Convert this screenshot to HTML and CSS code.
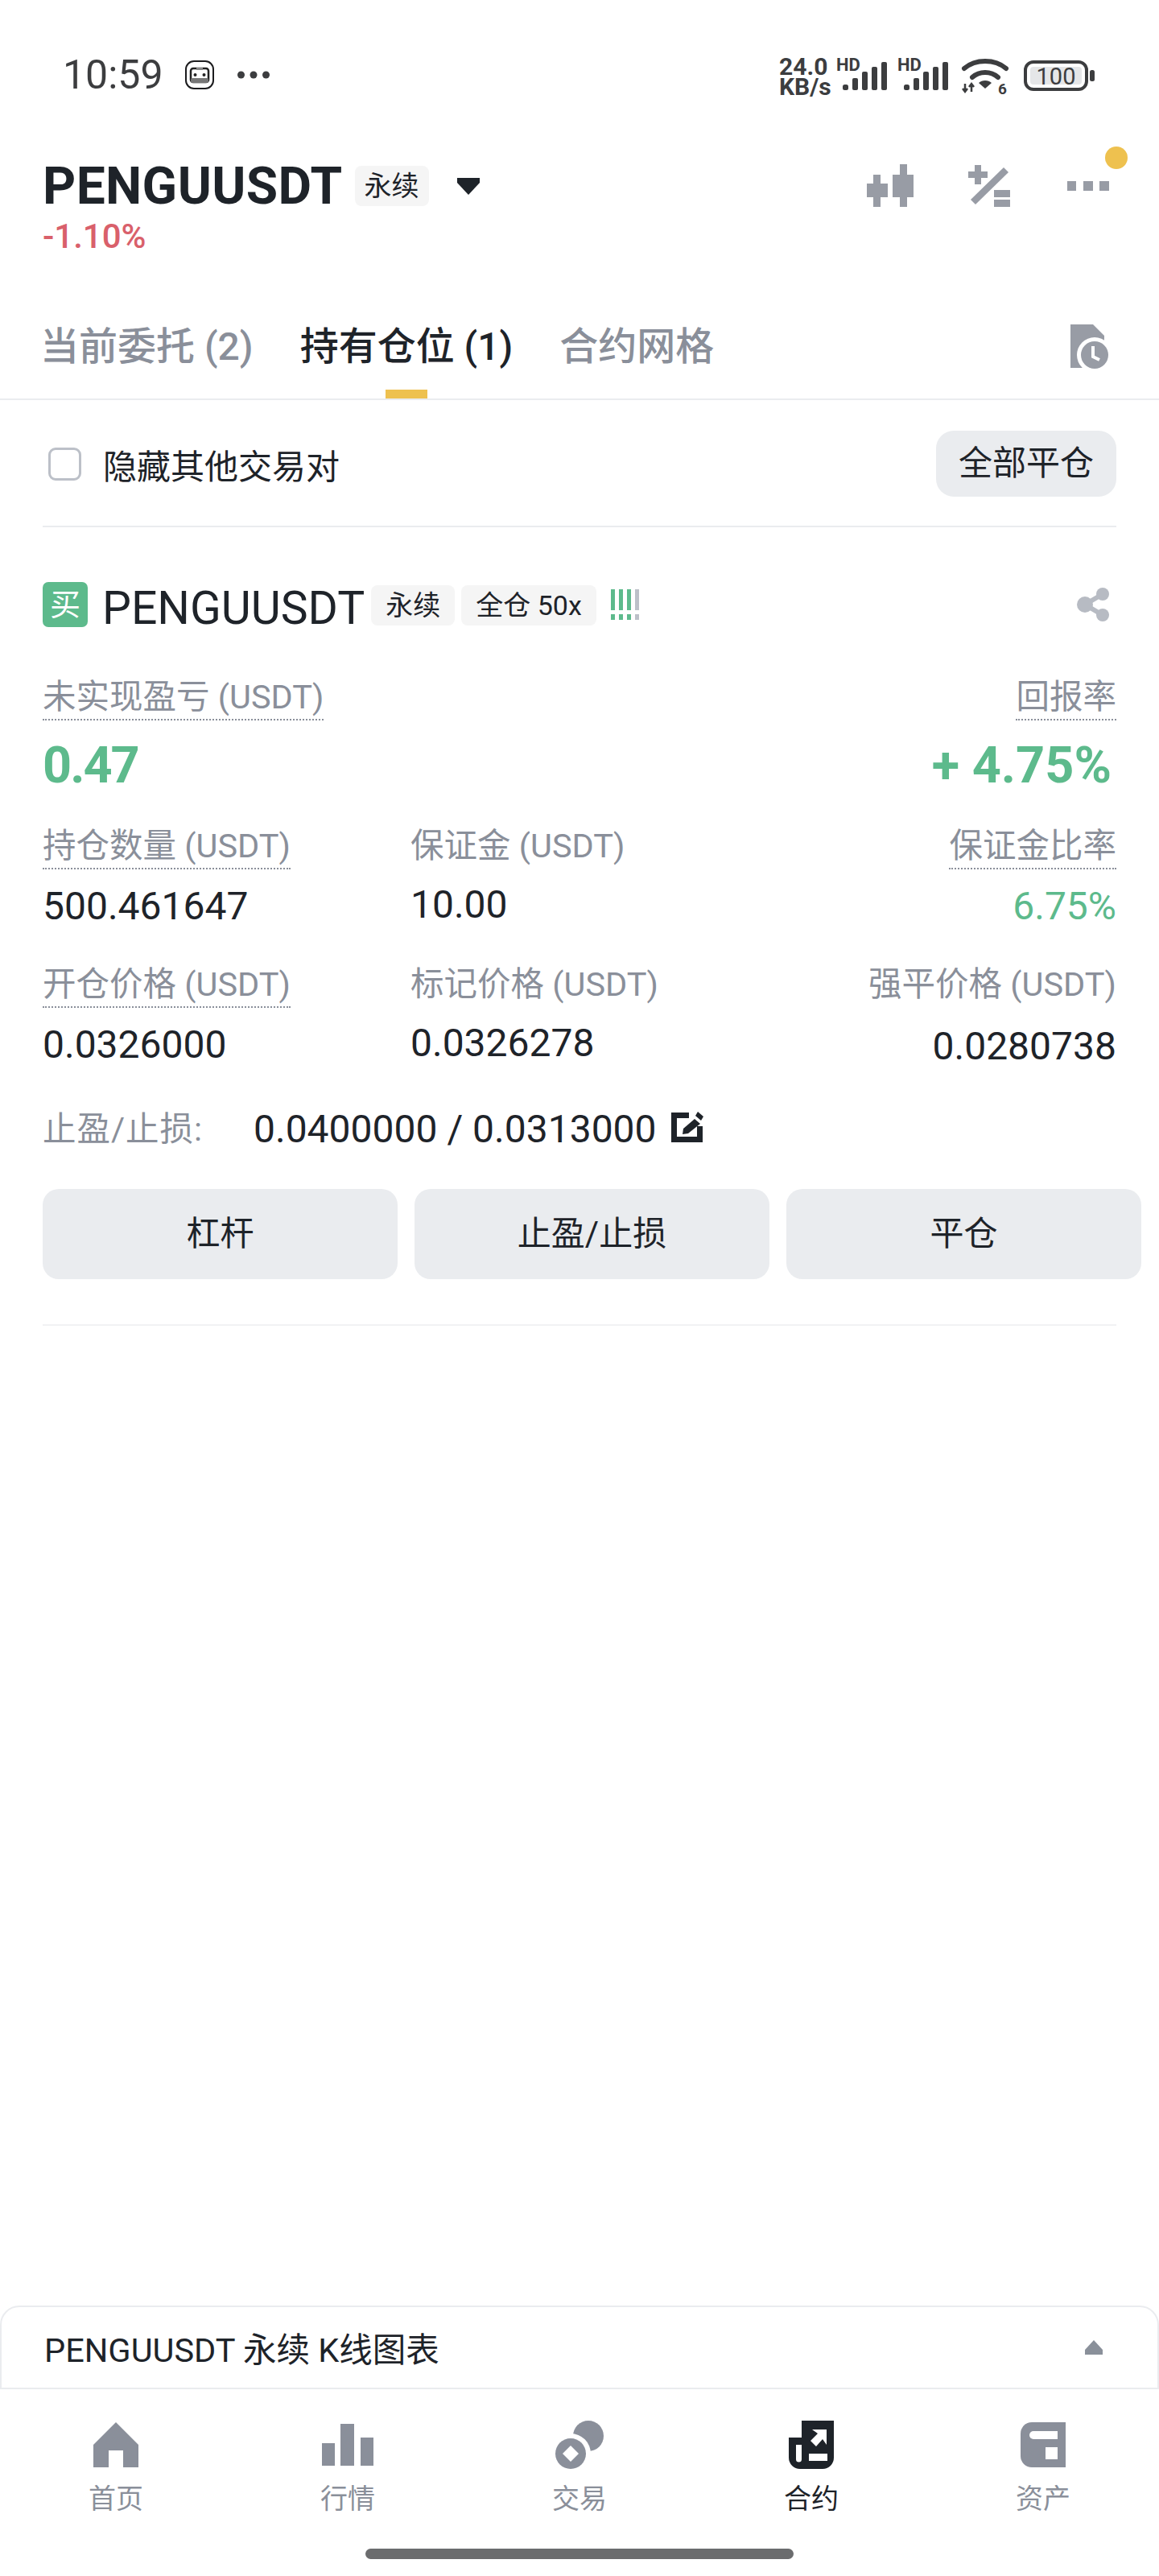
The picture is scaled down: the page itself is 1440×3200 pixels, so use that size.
FILE: index.html
```html
<!DOCTYPE html>
<html lang="zh-CN">
<head>
    <meta charset="UTF-8">
    <meta name="viewport" content="width=device-width, initial-scale=1.0">
    <title>PENGUUSDT</title>
    <link rel="stylesheet" href="styles.css">
</head>
<body>
<div class="page">
    <!-- 状态栏 -->
    <div class="status">
        <div class="status-left">
            <span class="time">10:59</span>
            <svg class="app-icon" width="36" height="36" viewBox="0 0 36 36">
                <rect x="1" y="1" width="34" height="34" rx="10" fill="#fff" stroke="#1c1c1e" stroke-width="2"/>
                <rect x="7" y="10" width="22" height="17" rx="3" fill="#fff" stroke="#222" stroke-width="2.500"/>
                <rect x="7" y="22" width="22" height="6" rx="2" fill="#777"/>
                <rect x="14" y="9" width="8" height="3" fill="#888"/>
                <circle cx="12.500" cy="18" r="2" fill="#222"/>
                <circle cx="23.500" cy="18" r="2" fill="#222"/>
            </svg>
            <svg class="more-dots" width="40" height="10" viewBox="0 0 40 10" fill="#3c3d3f">
                <circle cx="4.500" cy="5" r="4.500"/>
                <circle cx="20" cy="5" r="4.500"/>
                <circle cx="35.500" cy="5" r="4.500"/>
            </svg>
        </div>
        <div class="status-right">
            <div class="speed"><span>24.0</span><span>KB/s</span></div>
            <svg class="signal" width="64" height="52" viewBox="0 -6 64 52" fill="#3c3d3f">
                <text x="0" y="18" class="hd-text">HD</text>
                <rect x="8" y="35" width="7" height="7" rx="2.500"/>
                <rect x="20" y="27" width="7" height="15" rx="2"/>
                <rect x="32" y="19" width="7" height="23" rx="2"/>
                <rect x="44" y="13" width="7" height="29" rx="2"/>
                <rect x="56" y="7" width="7" height="35" rx="2"/>
            </svg>
            <svg class="signal" width="64" height="52" viewBox="0 -6 64 52" fill="#3c3d3f">
                <text x="0" y="18" class="hd-text">HD</text>
                <rect x="8" y="35" width="7" height="7" rx="2.500"/>
                <rect x="20" y="27" width="7" height="15" rx="2"/>
                <rect x="32" y="19" width="7" height="23" rx="2"/>
                <rect x="44" y="13" width="7" height="29" rx="2"/>
                <rect x="56" y="7" width="7" height="35" rx="2"/>
            </svg>
            <svg class="wifi" width="60" height="54" viewBox="0 0 60 54">
                <path d="M4 15 C18 3 42 3 56 15" fill="none" stroke="#3c3d3f" stroke-width="6" stroke-linecap="round"/>
                <path d="M14 26 C23 18 37 18 46 26" fill="none" stroke="#3c3d3f" stroke-width="6" stroke-linecap="round"/>
                <path d="M22 33 C26 29 34 29 38 33 L30 40 Z" fill="#3c3d3f"/>
                <path d="M5 34 V44 M2 40 L5 44 L8 40 M13 44 V34 M10 38 L13 34 L16 38" fill="none" stroke="#3c3d3f" stroke-width="2.500"/>
                <text x="46" y="47" class="wifi-text">6</text>
            </svg>
            <svg class="battery" width="88" height="38" viewBox="0 0 88 38">
                <rect x="2" y="2" width="76" height="34" rx="10" fill="#fff" stroke="#3c3d3f" stroke-width="4"/>
                <rect x="8" y="8" width="64" height="22" rx="4" fill="#e5e6e8"/>
                <text x="40" y="30" text-anchor="middle" class="battery-text">100</text>
                <rect x="82" y="12" width="6" height="14" rx="2.500" fill="#3c3d3f"/>
            </svg>
        </div>
    </div>

    <!-- 交易对标题 -->
    <div class="head">
        <div class="head-row">
            <span class="symbol">PENGUUSDT</span>
            <span class="badge">永续</span>
            <svg class="caret-down" width="28" height="21" viewBox="0 0 28 21"><path d="M0 0H28V6L14 21L0 6Z" fill="#1e2329"/></svg>
            <div class="head-icons">
                <svg width="58" height="54" viewBox="0 0 58 54" fill="#989ca5">
                    <path d="M8 13H17V24H26V41H17V53H8V41H0V24H8Z"/>
                    <path d="M41 0H50V13H58V41H50V53H41V41H32V13H41Z"/>
                </svg>
                <svg width="52" height="54" viewBox="0 0 52 54" fill="#989ca5">
                    <path d="M8 1H16V9H24V17H16V25H8V17H0V9H8Z"/>
                    <path d="M44 4L50 10L9 50L3 44Z"/>
                    <rect x="32" y="32" width="20" height="9"/>
                    <rect x="32" y="44" width="20" height="9"/>
                </svg>
                <div class="more">
                    <svg width="52" height="12" viewBox="0 0 52 12" fill="#989ca5">
                        <rect x="0" y="0" width="11" height="12"/>
                        <rect x="20" y="0" width="12" height="12"/>
                        <rect x="40" y="0" width="12" height="12"/>
                    </svg>
                    <span class="more-dot"></span>
                </div>
            </div>
        </div>
        <div class="change">-1.10%</div>
    </div>

    <!-- 选项卡 -->
    <div class="tabs">
        <span class="tab">当前委托 (2)</span>
        <span class="tab active">持有仓位 (1)</span>
        <span class="tab">合约网格</span>
        <svg class="history" width="48" height="56" viewBox="0 0 48 56">
            <path d="M0 0H28L42 14V54H0Z" fill="#989ca5"/>
            <circle cx="30" cy="38" r="22" fill="#fff"/>
            <circle cx="30" cy="38" r="17" fill="#989ca5"/>
            <path d="M28 27V40L36 44" fill="none" stroke="#fff" stroke-width="4"/>
        </svg>
    </div>

    <!-- 筛选 -->
    <div class="filter">
        <label class="check">
            <span class="check-box"></span>
            <span>隐藏其他交易对</span>
        </label>
        <div class="close-all">全部平仓</div>
    </div>

    <!-- 仓位卡片 -->
    <div class="card">
        <div class="card-title">
            <span class="buy-tag">买</span>
            <span class="card-symbol">PENGUUSDT</span>
            <span class="badge badge-card">永续</span>
            <span class="badge badge-card">全仓 50x</span>
            <svg class="risk" width="36" height="38" viewBox="0 0 36 38">
                <g fill="#5dba8c">
                    <rect x="0" y="0" width="5" height="26"/><rect x="0" y="31" width="5" height="7"/>
                    <rect x="10" y="0" width="5" height="26"/><rect x="10" y="31" width="5" height="7"/>
                    <rect x="20" y="0" width="5" height="26"/><rect x="20" y="31" width="5" height="7"/>
                </g>
                <g fill="#bcc0c8">
                    <rect x="30" y="0" width="5" height="26"/><rect x="30" y="31" width="5" height="7"/>
                </g>
            </svg>
            <svg class="share" width="40" height="42" viewBox="0 0 40 42" fill="#b7bbc3">
                <path d="M32 8L10 21L32 34" fill="none" stroke="#b7bbc3" stroke-width="6"/>
                <circle cx="10" cy="21" r="10"/>
                <circle cx="32" cy="8" r="8"/>
                <circle cx="32" cy="34" r="8"/>
            </svg>
        </div>

        <div class="pnl-row">
            <div>
                <span class="label dotted">未实现盈亏 (USDT)</span>
                <div class="pnl pnl-amount">0.47</div>
            </div>
            <div class="align-right">
                <span class="label dotted">回报率</span>
                <div class="pnl pnl-rate">+ 4.75%</div>
            </div>
        </div>

        <div class="stats">
            <div class="stat">
                <span class="label dotted">持仓数量 (USDT)</span>
                <div class="value">500.461647</div>
            </div>
            <div class="stat">
                <span class="label">保证金 (USDT)</span>
                <div class="value">10.00</div>
            </div>
            <div class="stat align-right">
                <span class="label dotted">保证金比率</span>
                <div class="value green">6.75%</div>
            </div>
            <div class="stat">
                <span class="label dotted">开仓价格 (USDT)</span>
                <div class="value">0.0326000</div>
            </div>
            <div class="stat">
                <span class="label">标记价格 (USDT)</span>
                <div class="value">0.0326278</div>
            </div>
            <div class="stat align-right">
                <span class="label">强平价格 (USDT)</span>
                <div class="value value-liq">0.0280738</div>
            </div>
        </div>

        <div class="tpsl">
            <span class="label tpsl-label">止盈/止损:</span>
            <span class="tpsl-value">0.0400000 / 0.0313000</span>
            <svg class="edit" width="40" height="38" viewBox="0 0 40 38" fill="#1e2329">
                <path d="M0 1H22V8H7V31H32V18H39V38H0Z"/>
                <path d="M29 9L36 15L21 27L14 28L15 21Z"/>
                <path d="M33 0L40 6L37 11L30 5Z"/>
            </svg>
        </div>

        <div class="actions">
            <div class="action">杠杆</div>
            <div class="action">止盈/止损</div>
            <div class="action">平仓</div>
        </div>
    </div>

    <div class="spacer"></div>

    <!-- K线图表折叠条 -->
    <div class="chart-bar">
        <span>PENGUUSDT 永续 K线图表</span>
        <svg width="22" height="18" viewBox="0 0 22 18"><path d="M11 0L22 12V18H0V12Z" fill="#8a909a"/></svg>
    </div>

    <!-- 底部导航 -->
    <div class="nav">
        <div class="nav-item">
            <div class="nav-icon">
                <svg width="56" height="56" viewBox="0 0 56 56" fill="#8a8f9a"><path d="M28 0L56 28V56H37V35H19V56H0V28Z"/></svg>
            </div>
            <span>首页</span>
        </div>
        <div class="nav-item">
            <div class="nav-icon">
                <svg width="64" height="52" viewBox="0 0 64 52" fill="#8a8f9a">
                    <rect x="0" y="24" width="16" height="28"/>
                    <rect x="23" y="0" width="17" height="52"/>
                    <rect x="48" y="17" width="16" height="35"/>
                </svg>
            </div>
            <span>行情</span>
        </div>
        <div class="nav-item">
            <div class="nav-icon">
                <svg width="60" height="60" viewBox="0 0 60 60">
                    <circle cx="41" cy="19" r="19" fill="#8a8f9a"/>
                    <circle cx="19" cy="41" r="25" fill="#fff"/>
                    <circle cx="19" cy="41" r="19" fill="#8a8f9a"/>
                    <path d="M19 31L29 41L19 51L9 41Z" fill="#fff"/>
                </svg>
            </div>
            <span>交易</span>
        </div>
        <div class="nav-item active">
            <div class="nav-icon">
                <svg width="56" height="60" viewBox="0 0 56 60">
                    <path d="M16 0H56V46A14 14 0 0 1 42 60H14A14 14 0 0 1 0 46V21H16Z" fill="#1e2329"/>
                    <path d="M9 30H16V48A3.500 3.500 0 0 1 9 48Z" fill="#fff"/>
                    <rect x="25" y="41" width="23" height="9" fill="#fff"/>
                    <path d="M29 11H47V30L42 23L34 32L27 25L36 16Z" fill="#fff"/>
                </svg>
            </div>
            <span>合约</span>
        </div>
        <div class="nav-item">
            <div class="nav-icon">
                <svg width="56" height="56" viewBox="0 0 56 56">
                    <path d="M14 0H56V56H14A14 14 0 0 1 0 42V14A14 14 0 0 1 14 0Z" fill="#8a8f9a"/>
                    <path d="M16 11H46V21H16A5 5 0 0 1 16 11Z" fill="#fff"/>
                    <rect x="31" y="31" width="15" height="15" fill="#fff"/>
                </svg>
            </div>
            <span>资产</span>
        </div>
    </div>
    <div class="home-bar"></div>
</div>
</body>
</html>
```

FILE: styles.css
```css
*{
    margin: 0;
    padding: 0;
    box-sizing: border-box;
}
body{
    background-color: #fff;
    font-family: Roboto, "Noto Sans CJK SC", sans-serif;
    color: #1e2329;
}
svg{
    display: block;
    flex-shrink: 0;
}
.page{
    width: 1440px;
    height: 3200px;
    display: flex;
    flex-direction: column;
}

/* 状态栏 */
.status{
    height: 190px;
    padding: 70px 80px 0 78px;
    display: flex;
    justify-content: space-between;
    align-items: flex-start;
}
.status-left{
    display: flex;
    align-items: center;
    height: 46px;
}
.time{
    font-size: 50px;
    line-height: 46px;
    color: #3c3d3f;
}
.app-icon{
    margin-left: 27px;
}
.more-dots{
    margin-left: 29px;
}
.status-right{
    display: flex;
    align-items: flex-start;
}
.speed{
    width: 62px;
    margin-left: -4px;
    font-size: 30px;
    font-weight: 700;
    line-height: 25px;
    color: #3c3d3f;
    display: flex;
    flex-direction: column;
}
.signal{
    margin: -6px 0 0 9px;
}
.signal + .signal{
    margin-left: 12px;
}
.hd-text{
    font-size: 22px;
    font-weight: 700;
}
.wifi{
    margin-left: 15px;
}
.wifi-text{
    font-size: 19px;
    font-weight: 700;
    fill: #3c3d3f;
}
.battery{
    margin: 5px 0 0 18px;
}
.battery-text{
    font-size: 29px;
    fill: #3c3d3f;
}

/* 标题 */
.head{
    padding: 11px 62px 0 53px;
}
.head-row{
    display: flex;
    align-items: center;
    height: 60px;
}
.symbol{
    padding-top: 2px;
    font-size: 64px;
    font-weight: 700;
    line-height: 60px;
    letter-spacing: 0.400px;
}
.badge{
    height: 50px;
    padding: 0 12px;
    background-color: #f5f5f5;
    border-radius: 8px;
    font-size: 34px;
    line-height: 50px;
}
.head-row .badge{
    margin-left: 15px;
}
.caret-down{
    margin-left: 35px;
}
.head-icons{
    margin-left: auto;
    display: flex;
    align-items: center;
    gap: 68px;
}
.more{
    position: relative;
    margin-left: 3px;
}
.more-dot{
    position: absolute;
    right: -23px;
    top: -43px;
    width: 28px;
    height: 28px;
    border-radius: 50%;
    background-color: #eec14f;
}
.change{
    margin-top: 13px;
    font-size: 42px;
    font-weight: 500;
    line-height: 40px;
    color: #d9606b;
}

/* 选项卡 */
.tabs{
    display: flex;
    align-items: center;
    gap: 58px;
    padding: 87px 62px 34px 50px;
    height: 183px;
    border-bottom: 2px solid #eaecef;
}
.tab{
    position: relative;
    font-size: 48px;
    font-weight: 500;
    line-height: 60px;
    color: #8a8f9a;
}
.tab.active{
    color: #1e2329;
}
.tab.active::after{
    content: "";
    position: absolute;
    left: 50%;
    bottom: -34px;
    width: 52px;
    height: 11px;
    margin-left: -26px;
    background-color: #eec14f;
}
.history{
    margin-left: auto;
}

/* 筛选 */
.filter{
    margin: 0 53px;
    padding: 38px 0 36px;
    display: flex;
    justify-content: space-between;
    align-items: center;
    border-bottom: 2px solid #eaecef;
}
.check{
    display: flex;
    align-items: center;
    gap: 27px;
    margin-left: 7px;
    font-size: 42px;
}
.check-box{
    width: 41px;
    height: 41px;
    border: 3px solid #bcc0c8;
    border-radius: 9px;
}
.close-all{
    width: 224px;
    height: 82px;
    border-radius: 22px;
    background-color: #eaecef;
    font-size: 42px;
    line-height: 82px;
    text-align: center;
}

/* 卡片 */
.card{
    margin: 0 53px;
    padding: 68px 0 56px;
    border-bottom: 2px solid #f1f2f4;
}
.card-title{
    display: flex;
    align-items: center;
    height: 56px;
}
.buy-tag{
    width: 56px;
    height: 56px;
    border-radius: 7px;
    background-color: #5dba8c;
    color: #fff;
    font-size: 38px;
    line-height: 56px;
    text-align: center;
}
.card-symbol{
    margin: 0 8px 0 18px;
    padding-top: 10px;
    font-size: 57px;
    line-height: 56px;
    white-space: nowrap;
}
.badge-card{
    margin: 2px 8px 0 0;
    padding: 0 18px;
}
.risk{
    margin-left: 10px;
}
.share{
    margin-left: auto;
    margin-right: 9px;
}
.label{
    display: inline-block;
    padding-bottom: 4px;
    font-size: 41.500px;
    line-height: 46px;
    color: #8a8f9a;
    white-space: nowrap;
}
.label.dotted{
    border-bottom: 2px dotted #8a8f9a;
}
.align-right{
    text-align: right;
}
.pnl-row{
    margin-top: 64px;
    display: flex;
    justify-content: space-between;
}
.pnl{
    margin-top: 26px;
    font-size: 63px;
    font-weight: 700;
    line-height: 60px;
    color: #5dba8c;
}
.pnl-amount{
    letter-spacing: -2px;
}
.pnl-rate{
    padding-right: 6px;
}
.stats{
    margin-top: 47px;
    display: grid;
    grid-template-columns: 457px 1fr 1fr;
    row-gap: 50px;
}
.value{
    margin-top: 22px;
    font-size: 48px;
    line-height: 48px;
}
.value.green{
    color: #5dba8c;
}
.value-liq{
    margin-top: 26px;
}
.tpsl{
    margin-top: 56px;
    display: flex;
    align-items: center;
    height: 46px;
}
.tpsl-label{
    width: 262px;
    padding-bottom: 0;
    letter-spacing: 1px;
}
.tpsl-value{
    font-size: 48px;
    line-height: 46px;
    white-space: nowrap;
}
.edit{
    margin: -6px 0 0 18px;
}
.actions{
    margin: 51px -32px 0 0;
    display: grid;
    grid-template-columns: repeat(3, 441px);
    column-gap: 21px;
}
.action{
    height: 112px;
    border-radius: 20px;
    background-color: #eaecef;
    font-size: 42px;
    line-height: 112px;
    text-align: center;
}

.spacer{
    flex: 1;
}

/* 底部 */
.chart-bar{
    height: 104px;
    padding: 0 68px 0 53px;
    display: flex;
    justify-content: space-between;
    align-items: center;
    border: 2px solid #eaecef;
    border-radius: 24px 24px 0 0;
    font-size: 41.500px;
}
.nav{
    padding-top: 39px;
    display: grid;
    grid-template-columns: repeat(5, 1fr);
}
.nav-item{
    display: flex;
    flex-direction: column;
    align-items: center;
    font-size: 34px;
    line-height: 40px;
    color: #8a8f9a;
}
.nav-item.active{
    color: #1e2329;
}
.nav-icon{
    height: 60px;
    margin-bottom: 17px;
    display: flex;
    align-items: center;
}
.home-bar{
    width: 532px;
    height: 13px;
    margin: 42px auto 21px;
    border-radius: 7px;
    background-color: #6b6c6e;
}
```
